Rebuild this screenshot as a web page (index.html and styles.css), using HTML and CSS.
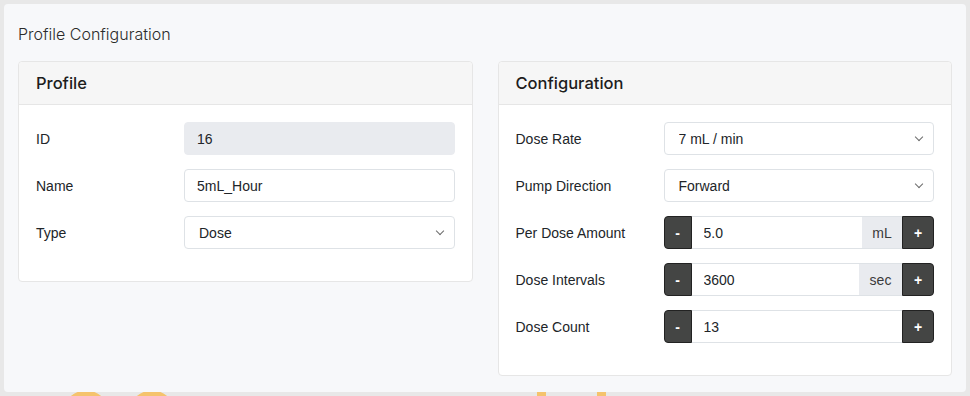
FILE: index.html
```html
<!DOCTYPE html>
<html lang="en">
<head>
    <meta charset="UTF-8">
    <meta name="viewport" content="width=device-width, initial-scale=1.0">
    <title>Profile Configuration</title>
    <link rel="stylesheet" href="styles.css">
</head>
<body>
    <div class="panel">
        <h1 class="panel-title">Profile Configuration</h1>

        <div class="cards">
            <div class="card">
                <div class="card-header">Profile</div>
                <div class="card-body">
                    <div class="row">
                        <label class="row-label" for="profileId">ID</label>
                        <input class="field field-disabled" id="profileId" type="text" value="16" disabled>
                    </div>
                    <div class="row">
                        <label class="row-label" for="profileName">Name</label>
                        <input class="field" id="profileName" type="text" value="5mL_Hour">
                    </div>
                    <div class="row">
                        <label class="row-label" for="profileType">Type</label>
                        <div class="select-wrap">
                            <select class="field select" id="profileType">
                                <option>Dose</option>
                                <option>Continuous</option>
                            </select>
                        </div>
                    </div>
                </div>
            </div>

            <div class="card">
                <div class="card-header">Configuration</div>
                <div class="card-body">
                    <div class="row">
                        <label class="row-label" for="doseRate">Dose Rate</label>
                        <div class="select-wrap">
                            <select class="field select" id="doseRate">
                                <option>7 mL / min</option>
                            </select>
                        </div>
                    </div>
                    <div class="row">
                        <label class="row-label" for="pumpDirection">Pump Direction</label>
                        <div class="select-wrap">
                            <select class="field select" id="pumpDirection">
                                <option>Forward</option>
                                <option>Reverse</option>
                            </select>
                        </div>
                    </div>
                    <div class="row">
                        <label class="row-label" for="doseAmount">Per Dose Amount</label>
                        <div class="input-group">
                            <button class="step step-minus" type="button">-</button>
                            <input class="group-field" id="doseAmount" type="text" value="5.0">
                            <span class="addon addon-ml">mL</span>
                            <button class="step step-plus" type="button">+</button>
                        </div>
                    </div>
                    <div class="row">
                        <label class="row-label" for="doseIntervals">Dose Intervals</label>
                        <div class="input-group">
                            <button class="step step-minus" type="button">-</button>
                            <input class="group-field" id="doseIntervals" type="text" value="3600">
                            <span class="addon addon-sec">sec</span>
                            <button class="step step-plus" type="button">+</button>
                        </div>
                    </div>
                    <div class="row">
                        <label class="row-label" for="doseCount">Dose Count</label>
                        <div class="input-group">
                            <button class="step step-minus" type="button">-</button>
                            <input class="group-field" id="doseCount" type="text" value="13">
                            <button class="step step-plus" type="button">+</button>
                        </div>
                    </div>
                </div>
            </div>
        </div>
    </div>

    <!-- logo behind the dialog, only its top shows -->
    <div class="backdrop-logo">
        <svg width="970" height="40" viewBox="0 0 970 40">
            <circle cx="86" cy="22" r="19" fill="none" stroke="#f5c36d" stroke-width="9"/>
            <circle cx="152" cy="22" r="19" fill="none" stroke="#f5c36d" stroke-width="9"/>
            <rect x="537" y="0" width="9" height="40" fill="#f5c36d"/>
            <rect x="597" y="0" width="9" height="40" fill="#f5c36d"/>
        </svg>
    </div>
</body>
</html>
```

FILE: styles.css
```css
html, body {
    height: 100%;
}
body {
    margin: 0;
    padding: 4px 4px 0;
    box-sizing: border-box;
    background-color: #e8e8e8;
    font-family: "Liberation Sans", Arial, sans-serif;
    font-size: 14px;
    color: #212529;
    overflow: hidden;
}
.panel {
    background-color: #f7f8fa;
    border-radius: 4px;
    padding: 18px 14px 16px;
}
.panel-title {
    margin: 0 0 15px;
    font-family: Inter, "Liberation Sans", sans-serif;
    font-size: 16px;
    font-weight: 300;
    line-height: 24px;
    color: #2b2b2b;
}
.cards {
    display: flex;
    align-items: flex-start;
    gap: 25px;
}
.card {
    flex: 1 1 0;
    min-width: 0;
    background-color: #fff;
    border: 1px solid #e6e6e6;
    border-radius: 4px;
}
.card-header {
    padding: 9px 17px;
    background-color: #f6f6f6;
    border-bottom: 1px solid #e6e6e6;
    border-radius: 4px 4px 0 0;
    font-family: Inter, "Liberation Sans", sans-serif;
    font-size: 16.5px;
    font-weight: 500;
    line-height: 24px;
    color: #1d1d1d;
}
.card-body {
    display: flex;
    flex-direction: column;
    gap: 14px;
    padding: 17px 17px 32px;
}
.row {
    display: grid;
    grid-template-columns: 148px minmax(0, 1fr);
    align-items: center;
}
.row-label {
    font-size: 14px;
}
.field {
    box-sizing: border-box;
    width: 100%;
    height: 33px;
    padding: 0 12px;
    border: 1px solid #dee2e6;
    border-radius: 4px;
    background-color: #fff;
    font-family: inherit;
    font-size: 14px;
    color: #212529;
}
.field-disabled {
    background-color: #e9ebef;
    border-color: #e9ebef;
}
.select-wrap {
    position: relative;
}
.select {
    appearance: none;
    -webkit-appearance: none;
    padding-left: 14px;
}
.select-wrap::after {
    content: "";
    position: absolute;
    right: 12px;
    top: 12px;
    width: 5px;
    height: 5px;
    border-right: 1px solid #6c6c6c;
    border-bottom: 1px solid #6c6c6c;
    transform: rotate(45deg);
    pointer-events: none;
}
.input-group {
    display: flex;
    height: 33px;
    min-width: 0;
}
.step {
    flex-shrink: 0;
    border: 1px solid #222;
    background-color: #444544;
    color: #fff;
    font-family: inherit;
    font-size: 14px;
    font-weight: bold;
    padding: 0;
    cursor: pointer;
}
.step-minus {
    width: 28px;
    border-radius: 4px 0 0 4px;
}
.step-plus {
    width: 32px;
    border-radius: 0 4px 4px 0;
}
.group-field {
    flex: 1 1 0;
    width: 0;
    min-width: 0;
    box-sizing: border-box;
    padding: 0 12px;
    border: 1px solid #dee2e6;
    border-left: none;
    border-right: none;
    font-family: inherit;
    font-size: 14px;
    color: #212529;
}
.addon {
    flex-shrink: 0;
    display: flex;
    align-items: center;
    justify-content: center;
    background-color: #e9ebef;
    color: #3a3a3a;
    border-top: 1px solid #dee2e6;
    border-bottom: 1px solid #dee2e6;
}
.addon-ml {
    width: 40px;
}
.addon-sec {
    width: 43px;
}
.backdrop-logo {
    height: 4px;
    overflow: hidden;
    margin: 0 -4px;
}
.backdrop-logo svg {
    display: block;
}
```
